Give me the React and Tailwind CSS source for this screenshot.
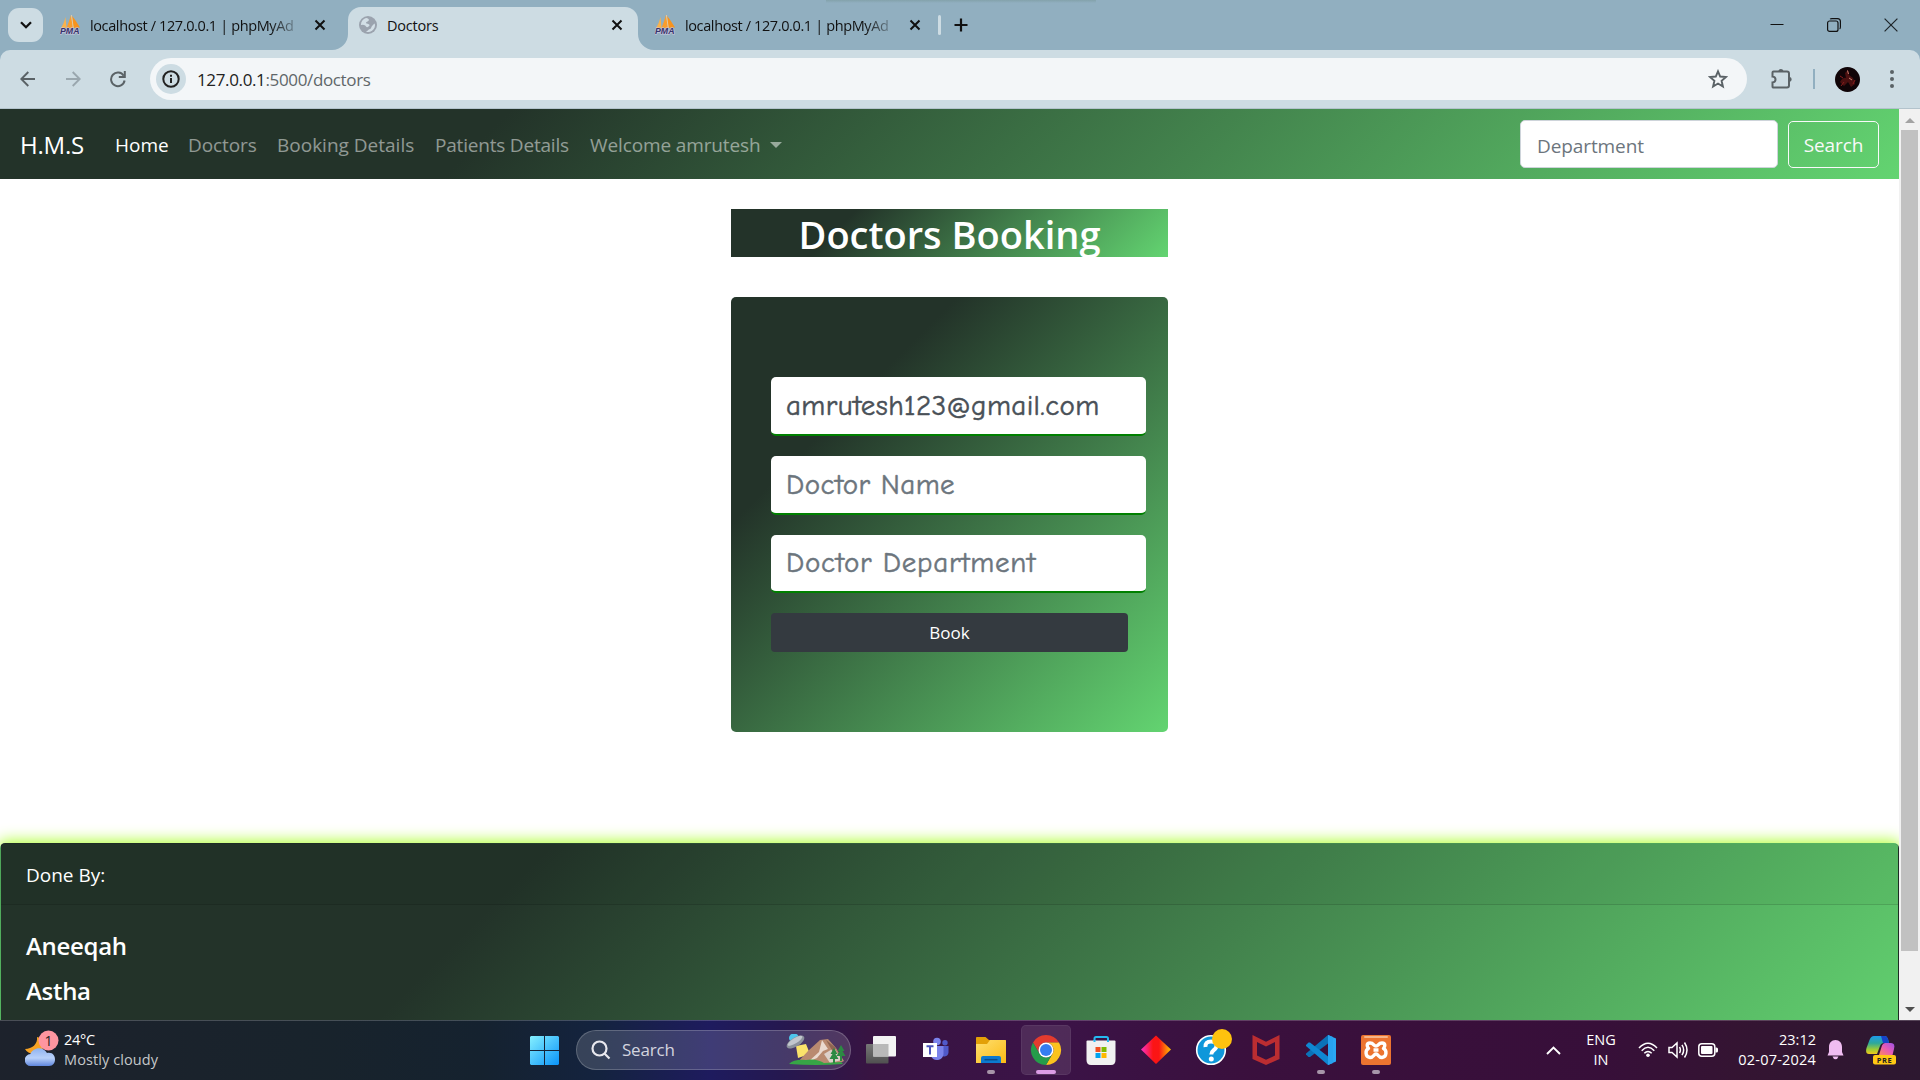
import React from "react";

const Pma = () => (
  <svg className="h-5 w-5 shrink-0" viewBox="0 0 20 20">
    <path d="M1 13 C3 10 4.500 6 5.500 2 L6.500 13Z" fill="#fbb24a" />
    <path d="M6.500 13 C8 9 9.500 5 11 0 L13 13Z" fill="#f99d2c" />
    <path d="M12 1 C15 4 17 8 20 12.500 L13.500 13Z" fill="#f7931e" />
    <path d="M11.400 0 L13.300 13" stroke="#fdd9a5" strokeWidth=".7" />
    <text x="0" y="19.300" fontSize="8.200" fontWeight="700" fontStyle="italic" fontFamily="Liberation Sans" fill="#37336b" stroke="#c9c8dd" strokeWidth="1.200" paintOrder="stroke" textLength="19.500" lengthAdjust="spacingAndGlyphs">PMA</text>
  </svg>
);

const TabClose = () => (
  <svg className="h-[12px] w-[12px] shrink-0" viewBox="0 0 12 12" stroke="#111" strokeWidth="2" fill="none">
    <path d="M1.500 1.500 10.500 10.500M10.500 1.500 1.500 10.500" />
  </svg>
);

const PmaTab = () => (
  <div className="flex h-10 items-center">
    <Pma />
    <div className="ml-[10px] w-[214px] whitespace-nowrap pt-px text-[14.5px] tracking-[-0.38px] text-[#111] [mask-image:linear-gradient(90deg,#000_180px,transparent_214px)]">
      localhost / 127.0.0.1 | phpMyAd
    </div>
    <div className="ml-[10px] flex"><TabClose /></div>
  </div>
);

function TabStrip() {
  return (
    <div className="relative flex h-[50px] bg-[#91afc0]">
      <div className="absolute left-[826px] top-0 h-[3px] w-[270px] bg-gradient-to-b from-[#83a2ab] to-transparent" />
      <div className="ml-2 mt-2 flex h-[34px] w-[35px] items-center justify-center rounded-[11px] bg-[#cddce3]">
        <svg className="h-[8px] w-[12px]" viewBox="0 0 12 8" fill="none" stroke="#111" strokeWidth="2.300"><path d="M1 1.200 6 6.200 11 1.200" /></svg>
      </div>
      <div className="ml-[17px] mt-[5px]"><PmaTab /></div>
      <svg className="ml-[6px] mt-[34px] h-4 w-4" viewBox="0 0 16 16"><path d="M16 0V16H0A16 16 0 0 0 16 0" fill="#cddce3" /></svg>
      <div className="mt-[7px] flex h-[43px] w-[290px] items-center rounded-t-[13px] bg-[#cddce3] pb-[7px] pl-[11px]">
        <svg className="h-[18px] w-[18px]" viewBox="0 0 18 18">
          <circle cx="9" cy="9" r="9" fill="#9ba3ae" />
          <path d="M7 2C4 3 2 5.500 1.900 9L4 8.800C5 8.800 6.500 9.500 7 10.500 8 12 10 10.500 10.500 9.500 11 8.500 9 8 7.500 7.600 6.500 7 7 6 8.500 5.500 9.500 5 10.500 4 9.500 3 8.800 2.500 8 2 7 2Z M15.800 7.500C16.500 10 15.500 13 13 14.700 11.500 15.800 9 16.400 7 15.800 9 15 9 13.500 11 13 12.500 12.500 12 10.500 13.500 9.500 14.200 9 14.500 8 15.800 7.500Z" fill="#d3dfe6" />
        </svg>
        <div className="ml-[10px] w-[224px] pt-px text-[14.5px] tracking-[-0.22px] text-[#111]">Doctors</div>
        <TabClose />
      </div>
      <svg className="mt-[34px] h-4 w-4" viewBox="0 0 16 16"><path d="M0 0V16H16A16 16 0 0 1 0 0" fill="#cddce3" /></svg>
      <div className="ml-px mt-[5px]"><PmaTab /></div>
      <div className="ml-[17px] mt-[15px] h-5 w-[3px] rounded bg-[#cddce3]" />
      <svg className="ml-[13px] mt-[18px] h-[14px] w-[14px]" viewBox="0 0 14 14" stroke="#111" strokeWidth="2.200"><path d="M7 0.500V13.500M.5 7H13.500" /></svg>
      <div className="ml-auto mr-[22px] flex h-[49px] items-center gap-[43px]">
        <svg className="h-[14px] w-[14px]" viewBox="0 0 14 14"><path d="M.5 6.500H13.500" stroke="#111" /></svg>
        <svg className="h-[14px] w-[14px]" viewBox="0 0 14 14" fill="none" stroke="#111" strokeWidth="1.200"><rect x=".6" y="3" width="10.400" height="10.400" rx="2" /><path d="M3.200 1.200Q3.500.6 5 .6H10.500Q13.400.6 13.400 3.500V9Q13.400 10.500 12.600 10.900" /></svg>
        <svg className="h-[14px] w-[14px]" viewBox="0 0 14 14" stroke="#1d2529" strokeWidth="1.200"><path d="M.6.6 13.400 13.400M13.400.6.6 13.400" /></svg>
      </div>
    </div>
  );
}

function Toolbar() {
  return (
    <div className="bg-[#91afc0]">
      <div className="flex h-[59px] items-center rounded-t-[10px] border-b border-[#b3c3cc] bg-[#cddce3]">
        <svg className="ml-[20px] h-4 w-4" viewBox="0 0 16 16" fill="none" stroke="#5a6266" strokeWidth="1.900"><path d="M15 8H1.800M8.300 1 1.300 8 8.300 15" /></svg>
        <svg className="ml-[29px] h-4 w-4" viewBox="0 0 16 16" fill="none" stroke="#9aa7ae" strokeWidth="1.900"><path d="M1 8H14.200M7.700 1 14.700 8 7.700 15" /></svg>
        <svg className="ml-[28px] h-[18px] w-[18px]" viewBox="0 0 18 18" fill="none" stroke="#5a6266" strokeWidth="2"><path d="M14.700 5.800A6.800 6.800 0 1 0 15.600 10.500" /><path d="M15.800 1V7H9.800" /></svg>
        <div className="ml-[23px] flex h-[42px] w-[1597px] items-center rounded-full bg-[#f3f6f8] pl-[6px]">
          <div className="flex h-[30px] w-[30px] items-center justify-center rounded-full bg-[#cddce3]">
            <svg className="h-[18px] w-[18px]" viewBox="0 0 18 18" fill="none" stroke="#222" strokeWidth="2"><circle cx="9" cy="9" r="7.700" /><path d="M9 8V13M9 4.800V6.700" /></svg>
          </div>
          <div className="ml-[11px] pt-[2px] text-[17px] tracking-[-0.36px] text-[#5f6669]"><span className="text-[#222]">127.0.0.1</span>:5000/doctors</div>
          <svg className="ml-auto mr-[19px] h-5 w-5" viewBox="0 0 20 20" fill="none" stroke="#5a6266" strokeWidth="1.900"><path d="M10 2.300 12.200 7.500 18 8 13.600 11.800 14.900 17.500 10 14.500 5.100 17.500 6.400 11.800 2 8 7.800 7.500Z" /></svg>
        </div>
        <svg className="ml-[24px] h-[22px] w-[22px]" viewBox="0 0 22 22"><path d="M2.500 3.500H16Q18 3.500 18 5.500V17.500Q18 19.500 16 19.500H2Q1.500 19.500 1.500 18.500V14.500Q4.500 14.200 4.500 11.500T1.500 8.500V4.500Q1.500 3.500 2.500 3.500Z" fill="none" stroke="#5a6266" strokeWidth="2" /><path d="M7.300 3A2.700 2.700 0 0 1 12.500 3ZM18.500 8.700A2.700 2.700 0 0 1 18.500 14Z" fill="#5a6266" /></svg>
        <div className="ml-[20px] h-5 w-[2px] bg-[#91afc0]" />
        <svg className="ml-[20px] h-[25px] w-[25px]" viewBox="0 0 25 25"><circle cx="12.500" cy="12.500" r="12.500" fill="#100407" /><path d="M5 15Q8 10 11 11L10 6 13 3 14 8 18 11 20 17 16 20 13 15 9 19Z" fill="#4a1010" /><path d="M12.500 3.500 13.500 7M14 11 17 13" stroke="#c98072" /><path d="M6 19 9 15M8 11 5 9M18 17 20 13" stroke="#8c1d1d" /></svg>
        <svg className="ml-[30px] h-[18px] w-[4px]" viewBox="0 0 4 18" fill="#5a6266"><circle cx="2" cy="2" r="2" /><circle cx="2" cy="9" r="2" /><circle cx="2" cy="16" r="2" /></svg>
      </div>
    </div>
  );
}

function Navbar() {
  return (
    <div className="flex h-[70px] items-center bg-[linear-gradient(315deg,#63d471_0%,#233329_74%)] pl-[20px] pr-[20px] pt-px text-[19px] tracking-[-0.1px] text-white/50">
      <div className="w-[95px] pt-px text-[24px] tracking-[-0.2px] text-white">H.M.S</div>
      <div className="w-[73px] pt-px tracking-normal text-white">Home</div>
      <div className="w-[89px] pt-px">Doctors</div>
      <div className="w-[158px] whitespace-nowrap pt-px tracking-normal">Booking Details</div>
      <div className="w-[155px] whitespace-nowrap pt-px tracking-[-0.2px]">Patients Details</div>
      <div className="w-[180px] whitespace-nowrap pt-px tracking-[-0.12px]">Welcome amrutesh</div>
      <div className="border-x-6 border-t-6 border-x-transparent border-t-white/50" />
      <div className="-mt-px ml-auto flex h-[48px] w-[258px] items-center rounded-[5px] border border-[#ced4da] bg-white pl-[16px] pt-[4px] text-[#6c757d]">Department</div>
      <div className="ml-[10px] flex h-[47px] w-[91px] items-center justify-center rounded-[5px] border border-[#f8f9fa] pt-px text-[#f8f9fa]">Search</div>
    </div>
  );
}

const Field = ({ children, tone }) => (
  <div className={"flex w-[375px] items-center overflow-hidden whitespace-nowrap rounded-[5px] border-b-2 border-[#008000] bg-white pl-[15px] font-['Comic_Sans_MS','Comic_Neue','Noto_Sans',sans-serif] text-[29px] [-webkit-text-stroke:0.5px_currentColor] " + tone}>{children}</div>
);

function Main() {
  return (
    <div className="flex h-[664px] flex-col items-center pt-[30px]">
      <h2 className="h-[48px] w-[437px] bg-[linear-gradient(315deg,#63d471_0%,#233329_74%)] text-center text-[38px] font-semibold leading-[50px] text-white">Doctors Booking</h2>
      <div className="mt-[40px] flex h-[435px] w-[437px] flex-col gap-[20px] rounded-[5px] bg-[linear-gradient(315deg,#63d471_0%,#233329_74%)] pl-[40px] pt-[80px]">
        <Field tone="h-[59px] text-[#495057] tracking-[0.4px]">amrutesh123@gmail.com</Field>
        <Field tone="h-[59px] text-[#6c757d] tracking-[0.45px]">Doctor Name</Field>
        <Field tone="h-[58px] text-[#6c757d] tracking-[0.75px]">Doctor Department</Field>
        <div className="flex h-[39px] w-[357px] items-center justify-center rounded-[4px] bg-[#343a40] text-[17px] text-white">Book</div>
      </div>
    </div>
  );
}

const Footer = () => (
  <div className="h-[230px] rounded-[5px] border border-black/12 bg-[linear-gradient(315deg,#63d471_0%,#233329_74%)] text-white shadow-[0_0_15px_2px_greenyellow]">
    <div className="flex h-[61px] items-center border-b border-black/12 bg-black/3 pl-[25px] pt-[2px] text-[19px]">Done By:</div>
    <div className="pl-[25px] pt-[24px] text-[24px] font-semibold leading-[34px] tracking-[-0.3px]">
      <div className="mb-[11px]">Aneeqah</div>
      <div>Astha</div>
    </div>
  </div>
);

const Scrollbar = () => (
  <div className="flex w-[21px] flex-col items-center bg-[#f1f1f1]">
    <div className="mt-[9px] border-x-[5px] border-b-[5px] border-x-transparent border-b-[#a3a3a3]" />
    <div className="mt-[7px] h-[821px] w-[17px] bg-[#c1c1c1]" />
    <div className="mt-[56px] border-x-[5px] border-t-[5px] border-x-transparent border-t-[#505050]" />
  </div>
);

const Cell = ({ children, run, active }) => (
  <div className="flex w-[55px] justify-center">
    <div className={"relative flex h-[50px] w-[50px] items-center justify-center rounded-[5px] " + (active ? "border border-white/6 bg-white/10" : "")}>
      {children}
      {run && <div className="absolute bottom-[1px] h-[4px] w-[8px] rounded-full bg-[#a795a9]" />}
      {active && <div className="absolute bottom-0 h-[4px] w-[20px] rounded-full bg-[#dc9ce6]" />}
    </div>
  </div>
);

const TaskSvg = ({ children }) => <svg className="h-[30px] w-[30px] overflow-visible" viewBox="0 0 30 30">{children}</svg>;

function Taskbar() {
  return (
    <div className="flex h-[60px] items-center border-t border-white/20 bg-[linear-gradient(90deg,#1d222c_0,#18232c_330px,#15222f_480px,#14233f_600px,#1e1b5e_710px,#251850_780px,#381442_870px,#3b1347_1050px,#3a103d_1250px,#370f39_1600px,#341432_1740px,#2d1830_1920px)] pb-px text-white">
      <div className="ml-[25px] flex w-[500px] items-center">
        <svg className="-mt-[5px] h-[36px] w-[36px]" viewBox="0 0 36 36">
          <defs><linearGradient id="cloud" x1="0" y1="0" x2="0" y2="1"><stop offset="0" stopColor="#8fb2ef" /><stop offset=".55" stopColor="#b9d1fa" /><stop offset="1" stopColor="#5f86dd" /></linearGradient></defs>
          <path d="M12 7C13 14 7 19 0 19 3 25 14 26 18 18 20 13 17 8 12 7Z" fill="#f6a224" />
          <path d="M6 36A6 6 0 0 1 5.500 24C7 18 18 15 22 23 28 22 30 26 30 29.500 30 33 28 36 24 36Z" fill="url(#cloud)" />
          <circle cx="23.500" cy="10.500" r="10" fill="#ff95a0" />
          <text x="23.500" y="15.500" fontSize="14" fontFamily="Open Sans" textAnchor="middle" fill="#222">1</text>
        </svg>
        <div className="-mt-px ml-[3px] text-[14.5px] leading-[20px]"><div className="tracking-[-0.3px]">24°C</div><div className="tracking-[0.1px] text-[#c5c8ca]">Mostly cloudy</div></div>
      </div>
      <svg className="ml-[5px] h-[29px] w-[29px]" viewBox="0 0 29 29">
        <defs><linearGradient id="win" x1="0" y1="0" x2="1" y2="1"><stop offset="0" stopColor="#85f0ff" /><stop offset="1" stopColor="#0a93f9" /></linearGradient></defs>
        <path d="M1 0H14V14H0V1ZM15 0H28L29 1V14H15ZM0 15H14V29H1L0 28ZM15 15H29V28L28 29H15Z" fill="url(#win)" />
      </svg>
      <div className="ml-[17px] flex h-[40px] w-[275px] items-center rounded-full border border-white/20 bg-white/15 pl-[14px]">
        <svg className="h-[20px] w-[20px]" viewBox="0 0 20 20" fill="none" stroke="#e8e8ee" strokeWidth="2.200"><circle cx="8.500" cy="8.500" r="7" /><path d="M13.500 13.500 18.500 18.500" /></svg>
        <span className="ml-[11px] text-[17px] tracking-[-0.2px] text-[#d3d4df]">Search</span>
        <svg className="ml-auto mr-[4px] h-[32px] w-[60px]" viewBox="0 0 60 32">
          <path d="M10 12 20 10 24 20 12 24Z" fill="#fbe36a" />
          <path d="M11 29 22 17 34 6 42 5 50 14 58 27 52 30H18Z" fill="#b98a70" />
          <path d="M36 6 42 15 37 17 31 24 22 28 33 18Z" fill="#ead9cf" /><path d="M38 20 48 14 56 26 44 29Z" fill="#ddd0ca" /><path d="M40 6 50 14 47 18Z" fill="#8e6552" />
          <path d="M3 30Q8 25 20 26 30 24 38 29L55 28 57 30Q30 32 3 30Z" fill="#37a546" />
          <path d="M48 14 44.500 20H46.500L43.500 25H47V29H49V25H52.500L49.500 20H51.500ZM55 11 51.500 17H53.500L50.500 22H54V27H56V22H59.500L56.500 17H58.500Z" fill="#2c8a43" />
          <ellipse cx="8" cy="4" rx="5" ry="4.500" fill="#4ec6ec" />
          <ellipse cx="9.500" cy="8" rx="10" ry="4.500" transform="rotate(-32 9.500 8)" fill="#8c929c" /><ellipse cx="9" cy="6.800" rx="8.500" ry="2.600" transform="rotate(-32 9 6.800)" fill="#c2c7cd" />
        </svg>
      </div>
      <div className="ml-[2px] flex">
        <Cell><TaskSvg>
          <defs><linearGradient id="tv" x1="0" y1="0" x2="0" y2="1"><stop offset="0" stopColor="#777" /><stop offset="1" stopColor="#505050" /></linearGradient></defs>
          <rect x="0" y="9" width="22.500" height="19.500" rx="1" fill="url(#tv)" /><rect x="7" y="1" width="23" height="20.500" rx="1" fill="#f3f3f3" /><rect x="7" y="9" width="15.500" height="12.500" fill="#b9b9b9" />
        </TaskSvg></Cell>
        <Cell><TaskSvg>
          <circle cx="16" cy="6.500" r="3.800" fill="#7b83eb" /><circle cx="24" cy="7.800" r="2.700" fill="#5059c9" />
          <path d="M19 11H27.500V17.500A4.500 4.500 0 0 1 19 19Z" fill="#5059c9" /><path d="M9 11H22.500V19A6.500 6.500 0 0 1 10 21Z" fill="#7b83eb" />
          <rect x="2" y="8" width="14" height="14" fill="#fff" /><path d="M5.500 11.300H12.500M9 11V19.500" stroke="#4b53bc" strokeWidth="2" />
        </TaskSvg></Cell>
        <Cell run><TaskSvg>
          <defs><linearGradient id="fold" x1="0" y1="0" x2="1" y2="1"><stop offset="0" stopColor="#ffdf70" /><stop offset="1" stopColor="#fbbb14" /></linearGradient></defs>
          <path d="M0 2.500Q0 2 1 2H9.500L13 5H29Q30 5 30 6V12H0Z" fill="#e3a008" /><path d="M0 9H11L14 5H29Q30 5 30 6V28H0Z" fill="url(#fold)" />
          <path d="M5 28V23Q5 21 7 21H23Q25 21 25 23V28Z" fill="#0c79cf" /><path d="M8.500 24.700H21.500" stroke="#0a4c8a" strokeWidth="1.500" />
        </TaskSvg></Cell>
        <Cell active><TaskSvg>
          <path d="M2 7.500A15 15 0 0 1 28 7.500H15A7.500 7.500 0 0 0 8.500 18.750Z" fill="#e33b2e" />
          <path d="M28 7.500A15 15 0 0 1 15 30L21.500 18.750A7.500 7.500 0 0 0 15 7.500Z" fill="#fcc31e" />
          <path d="M2 7.500A15 15 0 0 0 15 30L21.500 18.750A7.500 7.500 0 0 1 8.500 18.750Z" fill="#259c4a" />
          <circle cx="15" cy="15" r="7.500" fill="#fff" /><circle cx="15" cy="15" r="6" fill="#347df0" />
        </TaskSvg></Cell>
        <Cell><TaskSvg>
          <path d="M8.500 8V3.500Q8.500 2 10 2H20.500Q22 2 22 3.500V8" fill="none" stroke="#25b9f0" strokeWidth="2" />
          <path d="M.5 6.500Q.5 5.500 1.500 5.500H28.500Q29.500 5.500 29.500 6.500V25Q29.500 30 25 30H5Q.5 30 .5 25Z" fill="#f1f1f1" /><path d="M8.500 7V5M22 7V5" stroke="#25b9f0" strokeWidth="2" />
          <path d="M9.500 12H14.500V17H9.500Z" fill="#f15022" /><path d="M15.500 12H20.500V17H15.500Z" fill="#80bb01" /><path d="M9.500 18H14.500V23H9.500Z" fill="#00a4ef" /><path d="M15.500 18H20.500V23H15.500Z" fill="#ffb901" />
        </TaskSvg></Cell>
        <Cell><TaskSvg>
          <defs><linearGradient id="dia"><stop offset="0" stopColor="#fb32c8" /><stop offset=".4" stopColor="#fb1515" /><stop offset=".6" stopColor="#fb1515" /><stop offset="1" stopColor="#fdc500" /></linearGradient></defs>
          <path d="M15 .5 30 14.500 15 29 0 14.500Z" fill="url(#dia)" />
        </TaskSvg></Cell>
        <Cell><TaskSvg>
          <circle cx="15" cy="15" r="14.300" fill="#0f97da" stroke="#fff" strokeWidth="1.600" />
          <path d="M9.500 12Q9 6.500 15 6.500T20.500 11Q20.500 13 17.500 15.300 15.300 17 15.300 19.500" fill="none" stroke="#fff" strokeWidth="4" /><circle cx="15.300" cy="24" r="2.500" fill="#fff" /><circle cx="26" cy="4" r="10" fill="#ffc20e" />
        </TaskSvg></Cell>
        <Cell><TaskSvg><path d="M1.500 0 15 6.800 28.500 0V24L15 30 1.500 24ZM6 7V20.500L15 24.800 24 20.500V7L15 11.500Z" fill="#bb2d31" fillRule="evenodd" /></TaskSvg></Cell>
        <Cell run><TaskSvg>
          <path d="M22 0 30 3.500V26.500L22 30Z" fill="#2aa7f4" /><path d="M22 0V8.500L4 22 2.500 22 0 19.500V18.500Z" fill="#0b72b8" /><path d="M22 30V21.500L4 7.500 2.500 7.500 0 10V11Z" fill="#0f87d2" /><path d="M22 0 27 2V28L22 30Z" fill="#28a2ef" />
        </TaskSvg></Cell>
        <Cell run><TaskSvg>
          <rect width="30" height="30" rx="2" fill="#ec7430" /><rect x="3" y="1" width="24" height="2" rx="1" fill="#f6b488" />
          <path d="M9 8C13 8 12.500 11 15 11S17 8 21 8C25 8 24 12 22.500 13.500 26 15 26 22 21 22.500 17 22.500 17.500 19 15 19S13 22.500 9 22.500C4 22 4 15 7.500 13.500 6 12 5 8 9 8ZM12.500 15H17.500" fill="none" stroke="#fff" strokeWidth="3.400" strokeLinejoin="round" />
        </TaskSvg></Cell>
      </div>
      <div className="ml-auto flex items-center text-[14.5px] leading-[20px]">
        <svg className="h-[9px] w-[15px]" viewBox="0 0 15 9" fill="none" stroke="#fff" strokeWidth="1.900"><path d="M1 8 7.500 1.500 14 8" /></svg>
        <div className="-mt-px ml-[23px] w-[34px] text-center"><div>ENG</div><div>IN</div></div>
        <svg className="ml-[20px] h-[16px] w-[20px]" viewBox="0 0 20 16" fill="none" stroke="#fff" strokeWidth="1.500"><path d="M1 6Q10-3.500 19 6M3.700 8.700Q10 2 16.300 8.700M6.300 11.300Q10 7.500 13.700 11.300" /><circle cx="10" cy="13.300" r="1.800" fill="#fff" stroke="none" /></svg>
        <svg className="ml-[10px] h-[18px] w-[21px]" viewBox="0 0 21 18" fill="none" stroke="#fff" strokeWidth="1.500"><path d="M1 6.500H4L9 2V16L4 11.500H1ZM11.500 6Q13.300 9 11.500 12M14 3.800Q17.300 9 14 14.200M16.500 1.500Q21.500 9 16.500 16.500" /></svg>
        <svg className="ml-[9px] h-[14px] w-[20px]" viewBox="0 0 20 14"><rect x=".8" y=".8" width="16" height="12.400" rx="3" fill="none" stroke="#fff" strokeWidth="1.500" /><rect x="3" y="3" width="11.500" height="8" rx="1" fill="#fff" /><path d="M17.500 4.500H18.500Q20 4.500 20 6V8Q20 9.500 18.500 9.500H17.500Z" fill="#fff" /></svg>
        <div className="-mt-px w-[98px] text-right"><div>23:12</div><div className="whitespace-nowrap tracking-[0.2px]">02-07-2024</div></div>
        <svg className="ml-[11px] h-[20px] w-[17px]" viewBox="0 0 17 20" fill="#f0bcf1"><path d="M8.500 0C12.500 0 15 3 15 7V12L16.500 15.500H.5L2 12V7C2 3 4.500 0 8.500 0ZM5.500 16.500H11.500Q10.500 19.300 8.500 19.300T5.500 16.500Z" /></svg>
        <svg className="ml-[22px] mr-[24px] h-[30px] w-[30px]" viewBox="0 0 30 30">
          <defs>
            <linearGradient id="cpA" x1="0" y1="0" x2="0" y2="1"><stop offset="0" stopColor="#1d9bea" /><stop offset=".4" stopColor="#2da89a" /><stop offset=".75" stopColor="#9fcc33" /><stop offset="1" stopColor="#f2c81c" /></linearGradient>
            <linearGradient id="cpB" x1="1" y1="0" x2="0" y2="1"><stop offset="0" stopColor="#9b52e6" /><stop offset=".5" stopColor="#e85bb5" /><stop offset="1" stopColor="#fb8a5c" /></linearGradient>
          </defs>
          <path d="M8 1H19Q21 1 22 4L23 8H18Q15 8 14 11L11 19H3Q-1 19 .5 13L3.500 5Q5 1 8 1Z" fill="url(#cpA)" /><path d="M15 1H19Q21 1 22 4L23 8H17Z" fill="#1643ca" />
          <path d="M19 8H25Q29.500 8 28 14L26.500 20H13L16 10.500Q17 8 19 8Z" fill="url(#cpB)" />
          <rect x="7" y="20" width="23" height="9.500" rx="2" fill="#ffc814" />
          <text x="18.500" y="27.600" fontSize="7.500" fontWeight="700" fontFamily="Open Sans" letterSpacing=".6" textAnchor="middle" fill="#222">PRE</text>
        </svg>
      </div>
    </div>
  );
}

export default function App() {
  return (
    <div className="flex h-[1080px] w-[1920px] flex-col overflow-hidden bg-white font-['Open_Sans','Segoe_UI',sans-serif]">
      <TabStrip />
      <Toolbar />
      <div className="flex h-[911px] overflow-hidden">
        <div className="w-[1899px] overflow-hidden">
          <Navbar />
          <Main />
          <Footer />
        </div>
        <Scrollbar />
      </div>
      <Taskbar />
    </div>
  );
}
